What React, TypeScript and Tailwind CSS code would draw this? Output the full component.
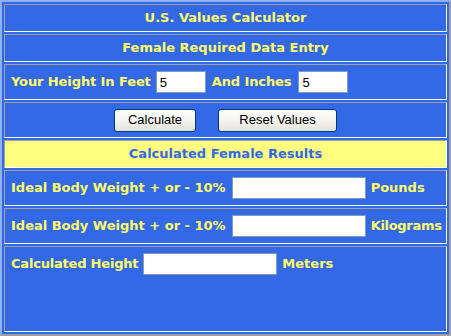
import React from "react";

const cell = "border border-t-[#a0a0a0] border-l-[#a0a0a0] border-b-white border-r-white";
const label = "font-bold text-[13px] text-[#ffff66] whitespace-nowrap";
const field =
  "h-[22px] border border-[#7f9db9] bg-white px-[3px] text-[13px] text-black outline-none";
const btn =
  "h-[23px] rounded-[3px] border border-[#003c74] bg-gradient-to-b from-white via-[#f4f4f0] to-[#e2e0d8] text-[13px] text-black";
const arial = { fontFamily: '"Liberation Sans", Arial, sans-serif' };

export default function App() {
  return (
    <div
      className="flex h-[336px] w-[451px] flex-col gap-[2px] border-2 border-t-[#8fb0f5] border-l-[#8fb0f5] border-b-[#a0a0a0] border-r-[#a0a0a0] bg-[#3369e7] p-[2px]"
      style={{ fontFamily: '"DejaVu Sans", Verdana, sans-serif' }}
    >
      <div className={`${cell} flex h-[28px] items-center justify-center`}>
        <span className={label}>U.S. Values Calculator</span>
      </div>
      <div className={`${cell} flex h-[28px] items-center justify-center`}>
        <span className={label}>Female Required Data Entry</span>
      </div>
      <div className={`${cell} flex h-[36px] items-center pl-[6px]`}>
        <span className={`${label} tracking-[-0.1px]`}>Your Height In Feet</span>
        <input className={`${field} ml-[5px] w-[50px]`} defaultValue="5" style={arial} />
        <span className={`${label} ml-[6px] tracking-[-0.1px]`}>And Inches</span>
        <input className={`${field} ml-[7px] w-[50px]`} defaultValue="5" style={arial} />
      </div>
      <div className={`${cell} flex h-[36px] items-center justify-center gap-[22px]`} style={arial}>
        <button className={`${btn} w-[82px]`}>Calculate</button>
        <button className={`${btn} w-[119px]`}>Reset Values</button>
      </div>
      <div className={`${cell} flex h-[28px] items-center justify-center bg-[#ffff80]`}>
        <span className="whitespace-nowrap text-[13px] font-bold text-[#3369e7]">Calculated Female Results</span>
      </div>
      <div className={`${cell} flex h-[36px] items-center pl-[6px]`}>
        <span className={label}>Ideal Body Weight + or - 10%</span>
        <input className={`${field} ml-[6px] w-[134px]`} />
        <span className={`${label} ml-[5px]`}>Pounds</span>
      </div>
      <div className={`${cell} flex h-[36px] items-center pl-[6px]`}>
        <span className={label}>Ideal Body Weight + or - 10%</span>
        <input className={`${field} ml-[6px] w-[134px]`} />
        <span className={`${label} ml-[5px] tracking-[-0.3px]`}>Kilograms</span>
      </div>
      <div className={`${cell} flex flex-1 items-start pl-[6px] pt-[6px]`}>
        <div className="flex items-center">
          <span className={`${label} tracking-[-0.2px]`}>Calculated Height</span>
          <input className={`${field} ml-[5px] w-[134px]`} />
          <span className={`${label} ml-[5px]`}>Meters</span>
        </div>
      </div>
    </div>
  );
}
